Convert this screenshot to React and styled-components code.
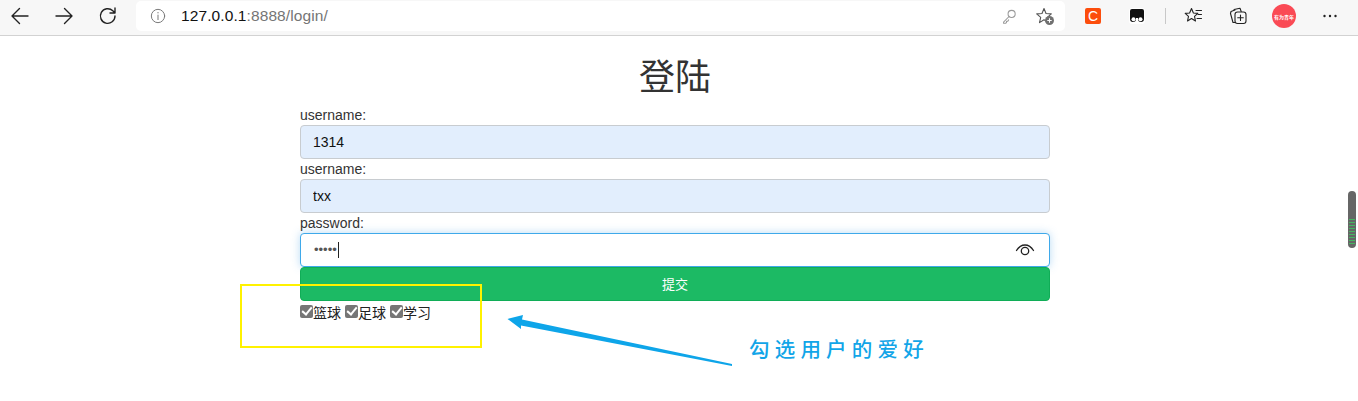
import React from "react";
import styled, { createGlobalStyle } from "styled-components";

const Global = createGlobalStyle`
  html, body { margin: 0; padding: 0; background: #fff; height: 401px; overflow: hidden; }
  body { font-family: "Liberation Sans", "Noto Sans CJK SC", sans-serif; font-size: 14px; color: #333; }
  * { box-sizing: border-box; }
`;
const Page = styled.div`
  position: relative;
  width: 1358px;
  height: 401px;
  overflow: hidden;
`;
const Toolbar = styled.header`
  display: flex;
  align-items: center;
  height: 36px;
  padding-bottom: 3px;
  background: #f7f7f7;
  border-bottom: 1px solid #d2d2d2;
`;
const Group = styled.div`
  display: flex;
  align-items: center;
  gap: 4px;
`;
const ToolButton = styled.div`
  display: flex;
  align-items: center;
  justify-content: center;
  width: ${p => p.$w || 40}px;
  height: 30px;
  color: #222;
`;
const AddressBar = styled.div`
  display: flex;
  align-items: center;
  width: 929px;
  height: 30px;
  margin: 0 8px;
  padding: 0 2px 0 13px;
  background: #fff;
  border-radius: 5px;
`;
const Url = styled.div`
  flex: 1;
  margin-left: 14px;
  font-size: 15.5px;
  letter-spacing: 0.1px;
  color: #757575;
  b { font-weight: 400; color: #111; }
`;
const Separator = styled.div`
  width: 1px;
  height: 16px;
  margin: 0 4px;
  background: #c8c8c8;
`;
const BrandC = styled.div`
  display: flex;
  align-items: center;
  justify-content: center;
  width: 16px;
  height: 16px;
  border-radius: 2px;
  background: #fc4d0c;
  color: #fff;
  font-size: 14px;
`;
const Avatar = styled.div`
  display: flex;
  align-items: center;
  justify-content: center;
  width: 24px;
  height: 24px;
  border-radius: 50%;
  background: #fa4a55;
  color: #fff;
  font-size: 5px;
  font-weight: 700;
  white-space: nowrap;
  overflow: hidden;
`;
const Main = styled.main`
  width: 750px;
  margin-left: 300px;
`;
const Title = styled.h1`
  margin: 20px 0 10px;
  height: 39px;
  font-size: 36px;
  font-weight: 400;
  line-height: 36px;
  text-align: center;
  color: #333;
  font-family: "Noto Sans CJK SC", sans-serif;
`;
const Label = styled.label`
  display: block;
  height: 20px;
  line-height: 20px;
  font-size: 14px;
  color: #333;
`;
const Field = styled.input`
  display: block;
  width: 100%;
  height: 34px;
  padding: 0 12px;
  border: 1px solid #c8ccd0;
  border-radius: 4px;
  background: #e2eefd;
  color: #111;
  font: 14px "Liberation Sans", sans-serif;
  outline: none;
`;
const FocusField = styled.div`
  display: flex;
  align-items: center;
  height: 34px;
  padding: 0 14px 0 13px;
  border: 1px solid #3fa9ea;
  border-radius: 4px;
  background: #fff;
  box-shadow: 0 0 8px rgba(102, 175, 233, 0.45);
`;
const Dots = styled.span`
  font-size: 13px;
  line-height: 16px;
  color: #555;
`;
const Caret = styled.span`
  flex: none;
  width: 1px;
  height: 16px;
  margin-left: 1px;
  margin-right: auto;
  background: #222;
`;
const Submit = styled.button`
  position: relative;
  display: block;
  width: 100%;
  height: 34px;
  padding: 0 0 2px;
  border: 1px solid #10ad57;
  border-radius: 4px;
  background: #1cba64;
  color: #fff;
  font: 13px "Liberation Sans", "Noto Sans CJK SC", sans-serif;
`;
const Hobbies = styled.div`
  display: flex;
  align-items: center;
  gap: 4px;
  height: 20px;
  margin-top: 2px;
`;
const Hobby = styled.label`
  display: flex;
  align-items: center;
  font-size: 14px;
  line-height: 16px;
  color: #222;
`;
const Check = styled.input`
  position: relative;
  appearance: none;
  width: 13px;
  height: 13px;
  margin: -3px 0 0;
  border-radius: 2px;
  background: #767676;
  &::after {
    content: "";
    position: absolute;
    left: 4px;
    top: 0;
    width: 4px;
    height: 8px;
    border: solid #fff;
    border-width: 0 2px 2px 0;
    transform: rotate(40deg);
  }
`;
const Highlight = styled.div`
  position: absolute;
  left: 240px;
  top: 284px;
  width: 242px;
  height: 64px;
  border: 2px solid #fff200;
  pointer-events: none;
`;
const ArrowMark = styled.svg`
  position: absolute;
  left: 500px;
  top: 310px;
  width: 240px;
  height: 60px;
`;
const Note = styled.div`
  position: absolute;
  left: 749px;
  top: 334px;
  font-family: "Noto Sans CJK SC", sans-serif;
  font-size: 20.5px;
  font-weight: 500;
  line-height: 28px;
  letter-spacing: 5.2px;
  color: #12a5e8;
  white-space: nowrap;
`;
const Thumb = styled.div`
  position: absolute;
  left: 1348px;
  top: 191px;
  width: 8px;
  height: 57px;
  border-radius: 4px;
  background: #666;
  overflow: hidden;
  &::after {
    content: "";
    position: absolute;
    left: 1px;
    right: 1px;
    top: 28px;
    height: 26px;
    background: repeating-linear-gradient(to bottom, #46b560 0 1px, #666 1px 3px);
  }
`;

const Icon = ({ size = 20, children, fill = "none", stroke = "currentColor", sw = 1.4 }) => (
  <svg width={size} height={size} viewBox="0 0 20 20" fill={fill} stroke={stroke} strokeWidth={sw} strokeLinecap="round" strokeLinejoin="round">
    {children}
  </svg>
);

export default function App() {
  return (
    <Page>
      <Global />
      <Toolbar>
        <Group>
          <ToolButton>
            <Icon><path d="M2 10h16M9.500 2.500 2 10l7.500 7.500" /></Icon>
          </ToolButton>
          <ToolButton>
            <Icon><path d="M2 10h16M10.500 2.500 18 10l-7.500 7.500" /></Icon>
          </ToolButton>
          <ToolButton>
            <Icon><path d="M17 10a7.300 7.300 0 1 1-2.200-5.200L17 7M17 2v5h-5" /></Icon>
          </ToolButton>
        </Group>
        <AddressBar>
          <Icon size={18} stroke="#777" sw={1.1}>
            <circle cx="10" cy="10" r="7.400" />
            <path d="M10 9v5M10 6v.6" />
          </Icon>
          <Url><b>127.0.0.1</b>:8888/login/</Url>
          <ToolButton $w={36}>
            <Icon size={17} stroke="#9a9a9a" sw={1.2}>
              <circle cx="12.500" cy="7" r="4.200" />
              <path d="M9.500 10 3 16.500V18h2.500l1-1v-1.500H8l1-1.500" />
            </Icon>
          </ToolButton>
          <ToolButton $w={36}>
            <svg width="20" height="20" viewBox="0 0 20 20">
              <path d="M9 2.500l2 5 5.300.4-4 3.500 1.200 5.200L9 13.800l-4.500 2.800 1.200-5.200-4-3.500 5.300-.4z" fill="none" stroke="#555" strokeWidth="1.1" strokeLinejoin="round" />
              <circle cx="14.500" cy="14.500" r="4.500" fill="#707070" />
              <path d="M14.500 12.300v4.400M12.300 14.500h4.400" stroke="#fff" strokeWidth="1.1" />
            </svg>
          </ToolButton>
        </AddressBar>
        <Group>
          <ToolButton><BrandC>C</BrandC></ToolButton>
          <ToolButton>
            <svg width="16" height="16" viewBox="0 0 16 16">
              <rect width="16" height="16" rx="3" fill="#fff" />
              <path d="M3 1h10a2 2 0 0 1 2 2v8a3 3 0 0 1-6 0V10H7v1a3 3 0 0 1-6 0V3a2 2 0 0 1 2-2z" fill="#111" />
              <circle cx="4.500" cy="11.200" r="2" fill="#fff" />
              <circle cx="11.500" cy="11.200" r="2" fill="#fff" />
            </svg>
          </ToolButton>
          <Separator />
          <ToolButton>
            <Icon sw={1.1}>
              <path d="M7.500 2.500 9.400 7l4.400.4-3.300 3 1 4.600-4-2.500-4 2.500 1-4.600-3.300-3L5.600 7z" />
              <path d="M12 4.500h5.500M14 8.500h3.500M13 12.500h4.500" />
            </Icon>
          </ToolButton>
          <ToolButton>
            <Icon sw={1.1}>
              <path d="M6 3.500 12 2.200l1.200 3.300" />
              <path d="M7 16.500H5L2.500 7.500 3 5.500 7 4" />
              <rect x="7" y="6" width="11" height="11.500" rx="2.500" />
              <path d="M12.500 9v5.500M9.700 11.700h5.600" />
            </Icon>
          </ToolButton>
          <ToolButton $w={44}><Avatar>有为青年</Avatar></ToolButton>
          <ToolButton>
            <svg width="16" height="4" viewBox="0 0 16 4" fill="#222">
              <circle cx="2.500" cy="2" r="1.200" />
              <circle cx="8" cy="2" r="1.200" />
              <circle cx="13.500" cy="2" r="1.200" />
            </svg>
          </ToolButton>
        </Group>
      </Toolbar>

      <Main>
        <Title>登陆</Title>
        <Label>username:</Label>
        <Field type="text" defaultValue="1314" readOnly />
        <Label>username:</Label>
        <Field type="text" defaultValue="txx" readOnly />
        <Label>password:</Label>
        <FocusField>
          <Dots>•••••</Dots>
          <Caret />
          <svg width="20" height="14" viewBox="0 0 20 14" fill="none" stroke="#222" strokeWidth="1.3">
            <path d="M1.500 7.500C4 3.500 7 2 10 2s6 1.500 8.500 5.500" strokeLinecap="round" />
            <circle cx="10" cy="8" r="3.700" />
          </svg>
        </FocusField>
        <Submit type="button">提交</Submit>
        <Hobbies>
          <Hobby><Check type="checkbox" defaultChecked />篮球</Hobby>
          <Hobby><Check type="checkbox" defaultChecked />足球</Hobby>
          <Hobby><Check type="checkbox" defaultChecked />学习</Hobby>
        </Hobbies>
      </Main>

      <Highlight />
      <ArrowMark viewBox="500 310 240 60">
        <polygon points="507.500,319 523,315 522,319.500 732,364 732,366 521,325.500 521,329" fill="#0ea5e9" />
      </ArrowMark>
      <Note>勾选用户的爱好</Note>
      <Thumb />
    </Page>
  );
}
